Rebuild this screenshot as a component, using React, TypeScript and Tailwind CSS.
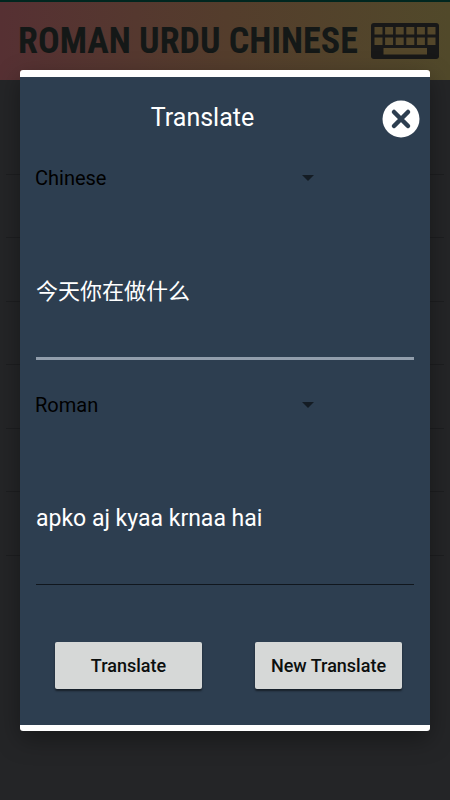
import { useState } from 'react'

interface Option {
  value: string
  label: string
}

const languages: Option[] = [
  { value: 'zh', label: 'Chinese' },
  { value: 'roman', label: 'Roman' },
  { value: 'ur', label: 'Urdu' },
]

const rows = [1, 2, 3, 4, 5, 6, 7]
const keys = [0, 1, 2, 3, 4, 5]

// ─── Icons ────────────────────────────────────────────────────────────────────

function KeyboardIcon() {
  return (
    <svg width="68" height="36" viewBox="0 0 68 36" aria-hidden="true" className="shrink-0">
      <rect width="68" height="36" rx="3" fill="#181818" />
      <g fill="#53462a">
        {keys.map((k) => (
          <rect key={k} x={3.5 + k * 10.6} y="4" width="8" height="7.5" />
        ))}
        {keys.map((k) => (
          <rect key={k} x={3.5 + k * 10.6} y="14.5" width="8" height="7.5" />
        ))}
        <rect x="12.5" y="25" width="43.5" height="6.5" />
      </g>
    </svg>
  )
}

function CloseIcon() {
  return (
    <svg width="38" height="38" viewBox="0 0 38 38" aria-hidden="true">
      <circle cx="19" cy="19" r="18.5" fill="#fff" />
      <path d="M12 12 26 26M26 12 12 26" stroke="#2d3e50" strokeWidth="4.5" strokeLinecap="round" />
    </svg>
  )
}

// ─── LanguageSelect ───────────────────────────────────────────────────────────

function LanguageSelect({ label, value, onChange }: {
  label: string
  value: string
  onChange: (v: string) => void
}) {
  return (
    <div className="grid w-3/4 items-center">
      <select
        aria-label={label}
        value={value}
        onChange={(e) => onChange(e.target.value)}
        className="col-start-1 row-start-1 h-8 w-full appearance-none bg-transparent text-xl text-black outline-none"
      >
        {languages.map((l) => (
          <option key={l.value} value={l.value}>{l.label}</option>
        ))}
      </select>
      <svg
        width="12"
        height="6"
        viewBox="0 0 12 6"
        aria-hidden="true"
        className="pointer-events-none col-start-1 row-start-1 mr-1.5 justify-self-end"
      >
        <path d="M0 0h12L6 6z" fill="#141c24" />
      </svg>
    </div>
  )
}

// ─── App ──────────────────────────────────────────────────────────────────────

export default function App() {
  const [from, setFrom] = useState('zh')
  const [to, setTo] = useState('roman')
  const [source, setSource] = useState('今天你在做什么')
  const [result, setResult] = useState('apko aj kyaa krnaa hai')

  const clear = () => {
    setSource('')
    setResult('')
  }

  return (
    <div className="relative min-h-screen bg-[#242527] font-['Roboto','Noto_Sans_CJK_SC',sans-serif]">
      <header className="flex h-20 items-center justify-between border-t-2 border-[#00261f] bg-linear-to-r from-[#563033] via-[#543d2c] to-[#51492a] pr-[11px] pl-[18px]">
        <h1 className="whitespace-nowrap font-['Roboto_Condensed','Open_Sans_Condensed','Noto_Sans_Condensed',sans-serif] text-4xl font-bold text-[#141817]">
          ROMAN URDU CHINESE
        </h1>
        <KeyboardIcon />
      </header>

      <ul className="mx-1.5 mt-[31px] flex h-[445px] flex-col">
        {rows.map((r) => (
          <li key={r} className="flex-1 border-b border-[#1d1e20]" />
        ))}
      </ul>

      <div className="absolute inset-0 px-5 pt-[70px]">
        <section
          role="dialog"
          aria-labelledby="dialog-title"
          className="rounded-[3px] bg-white pt-[7px] pb-1.5 shadow-[0_8px_24px_rgba(0,0,0,0.35)]"
        >
          <div className="bg-[#2d3e50] px-[15px] pb-9">
            <div className="-mr-[5px] flex items-center justify-between pt-[23px]">
              <h2 id="dialog-title" className="flex-1 pr-3 pb-0.5 text-center text-[25px] leading-8 text-white">
                Translate
              </h2>
              <button type="button" aria-label="Close" className="cursor-pointer">
                <CloseIcon />
              </button>
            </div>

            <div className="pt-6">
              <LanguageSelect label="Source language" value={from} onChange={setFrom} />
              <textarea
                aria-label="Source text"
                value={source}
                onChange={(e) => setSource(e.target.value)}
                className="mx-px mt-14 block h-[110px] w-[calc(100%-2px)] resize-none border-b-[3px] border-[#929eac] pt-[26px] text-[22px] leading-8 text-white outline-none"
              />
            </div>

            <div className="pt-[29px]">
              <LanguageSelect label="Target language" value={to} onChange={setTo} />
              <textarea
                aria-label="Translated text"
                value={result}
                onChange={(e) => setResult(e.target.value)}
                className="mx-px mt-14 block h-[108px] w-[calc(100%-2px)] resize-none border-b border-[#10161d] pt-[26px] text-[23px] leading-8 text-white outline-none"
              />
            </div>

            <div className="flex justify-between gap-4 px-[13px] pt-[57px] pl-5">
              <button type="button" className="h-[47px] w-[147px] cursor-pointer rounded-xs bg-[#d6d8d7] text-lg font-medium text-[#0c0f0e] shadow-[0_2px_2px_rgba(0,0,0,0.5)]">
                Translate
              </button>
              <button type="button" onClick={clear} className="h-[47px] w-[147px] cursor-pointer rounded-xs bg-[#d6d8d7] text-lg font-medium text-[#0c0f0e] shadow-[0_2px_2px_rgba(0,0,0,0.5)]">
                New Translate
              </button>
            </div>
          </div>
        </section>
      </div>
    </div>
  )
}
